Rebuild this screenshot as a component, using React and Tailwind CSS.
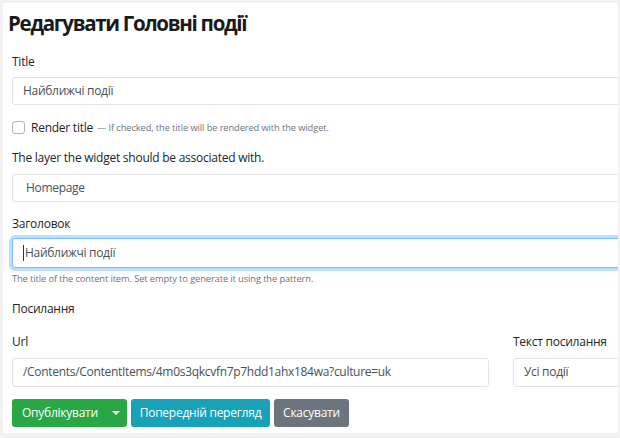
import React from "react";

const font = { fontFamily: '"Open Sans", "Noto Sans", sans-serif' };

function Input({ value, className = "", focused = false, padClass = "pl-[10px]" }) {
  return (
    <div
      className={
        "h-[28px] flex items-center bg-white rounded-[3px] text-[12px] tracking-[-0.3px] text-[#495057] " +
        padClass +
        " " +
        (focused
          ? "border border-[#80bdff] shadow-[0_0_0_3px_rgba(0,123,255,0.25)]"
          : "border border-[#e3e3e3]") +
        " " +
        className
      }
    >
      {focused && <span className="w-px h-[16px] bg-[#333] mr-px" />}
      <span className="whitespace-nowrap">{value}</span>
    </div>
  );
}

export default function App() {
  return (
    <div className="w-[620px] h-[438px] bg-[#f2f2f2] pl-[3px] pt-[3px]" style={font}>
      <div className="w-[615px] h-[430px] bg-white overflow-hidden relative text-[#212529] text-[12px] tracking-[-0.25px]">
        <h1 className="text-[20.5px] font-bold leading-none pl-[5px] pt-[10px] tracking-[-1.3px] text-[#1a1a1a]">
          Редагувати Головні події
        </h1>
        <div className="pl-[9px] w-[630px]">
          <div className="mt-[22px] leading-none">Title</div>
          <Input value="Найближчі події" className="mt-[9px]" />
          <div className="mt-[16px] flex items-center h-[14px]">
            <span className="w-[13px] h-[13px] border border-[#adb5bd] rounded-[3px] bg-white" />
            <span className="ml-[6px]">Render title</span>
            <span className="ml-[4px] text-[9.3px] tracking-[-0.1px] text-[#6c757d]">— If checked, the title will be rendered with the widget.</span>
          </div>
          <div className="mt-[17px] leading-none">The layer the widget should be associated with.</div>
          <Input value="Homepage" className="mt-[10px]" padClass="pl-[13px]" />
          <div className="mt-[16px] leading-none">Заголовок</div>
          <Input value="Найближчі події" className="mt-[8px] h-[30px]" focused padClass="pl-[10px]" />
          <div className="mt-[6px] text-[9.3px] tracking-[-0.1px] text-[#6c757d] leading-none">
            The title of the content item. Set empty to generate it using the pattern.
          </div>
          <div className="mt-[20px] leading-none">Посилання</div>
          <div className="flex mt-[21px] gap-[24px]">
            <div className="w-[477px]">
              <div className="leading-none">Url</div>
              <Input value="/Contents/ContentItems/4m0s3qkcvfn7p7hdd1ahx184wa?culture=uk" className="mt-[10px] h-[29px]" />
            </div>
            <div className="w-[120px]">
              <div className="leading-none">Текст посилання</div>
              <Input value="Усі події" className="mt-[10px] h-[29px]" />
            </div>
          </div>
          <div className="flex mt-[12px] gap-[4px] text-white">
            <div className="w-[115px] h-[28px] bg-[#28a745] rounded-[3px] flex items-center pl-[10px]">
              <span>Опублікувати</span>
              <span className="ml-auto mr-[7px] w-0 h-0 border-l-[4px] border-r-[4px] border-t-[4px] border-l-transparent border-r-transparent border-t-white" />
            </div>
            <div className="w-[139px] h-[28px] bg-[#17a2b8] rounded-[3px] flex items-center justify-center">
              Попередній перегляд
            </div>
            <div className="w-[75px] h-[28px] bg-[#6c757d] rounded-[3px] flex items-center justify-center">
              Скасувати
            </div>
          </div>
        </div>
      </div>
    </div>
  );
}
